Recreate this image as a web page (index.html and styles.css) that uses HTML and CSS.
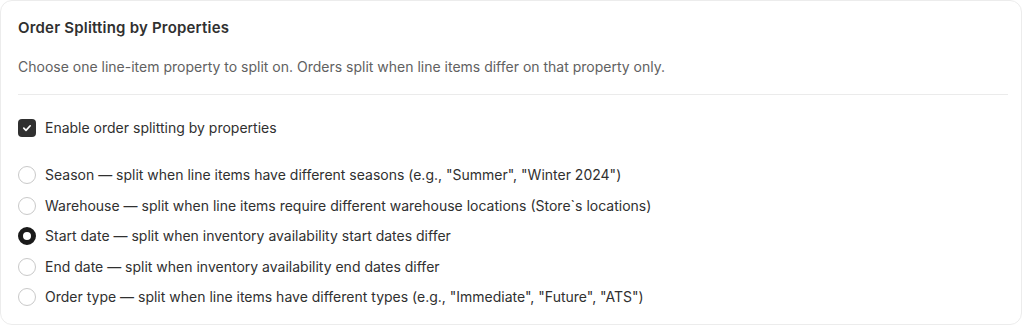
FILE: index.html
```html
<!DOCTYPE html>
<html>
<head>
<meta charset="utf-8">
<link rel="stylesheet" href="styles.css">
</head>
<body>
<div class="card">
  <h2 class="title">Order Splitting by Properties</h2>
  <p class="subtitle">Choose one line-item property to split on. Orders split when line items differ on that property only.</p>
  <div class="divider"></div>
  <label class="row check-row">
    <span class="checkbox">
      <svg width="12" height="12" viewBox="0 0 12 12"><path d="M2.8 6.2 L5 8.4 L9.2 3.8" fill="none" stroke="#fff" stroke-width="1.7" stroke-linecap="round" stroke-linejoin="round"/></svg>
    </span>
    <span class="label">Enable order splitting by properties</span>
  </label>
  <div class="radios">
    <label class="row"><span class="radio"></span><span class="label">Season — split when line items have different seasons (e.g., "Summer", "Winter 2024")</span></label>
    <label class="row"><span class="radio"></span><span class="label">Warehouse — split when line items require different warehouse locations (Store`s locations)</span></label>
    <label class="row"><span class="radio on"></span><span class="label">Start date — split when inventory availability start dates differ</span></label>
    <label class="row"><span class="radio"></span><span class="label">End date — split when inventory availability end dates differ</span></label>
    <label class="row"><span class="radio"></span><span class="label">Order type — split when line items have different types (e.g., "Immediate", "Future", "ATS")</span></label>
  </div>
</div>
</body>
</html>
```
FILE: styles.css
```css
html, body {
  margin: 0;
  padding: 0;
  background: #ffffff;
}
body {
  font-family: Inter, "Noto Sans", sans-serif;
  color: #303030;
}
.card {
  box-sizing: border-box;
  width: 1022px;
  height: 325px;
  background: #fff;
  border: 1px solid #ececec;
  border-radius: 12px;
  padding: 17px 17px 0 17px;
}
.title {
  margin: 0;
  font-size: 15px;
  font-weight: 600;
  letter-spacing: 0.2px;
  line-height: 20px;
  color: #303030;
}
.subtitle {
  margin: 19px 0 0 0;
  font-size: 14px;
  line-height: 20px;
  color: #616161;
}
.divider {
  margin-top: 17px;
  height: 1px;
  background: #ebebeb;
  margin-right: -4px;
}
.row {
  display: flex;
  align-items: center;
  gap: 9px;
  height: 20px;
  font-size: 14px;
  line-height: 20px;
  color: #303030;
}
.check-row {
  margin-top: 23px;
}
.checkbox {
  width: 18px;
  height: 18px;
  box-sizing: border-box;
  border-radius: 4px;
  background: #303030;
  display: flex;
  align-items: center;
  justify-content: center;
}
.radios {
  margin-top: 27px;
  display: flex;
  flex-direction: column;
  gap: 10.5px;
}
.radio {
  width: 18px;
  height: 18px;
  box-sizing: border-box;
  border-radius: 50%;
  border: 1px solid #c9c9c9;
  background: #fff;
}
.radio.on {
  border: 5px solid #1a1a1a;
}
```
